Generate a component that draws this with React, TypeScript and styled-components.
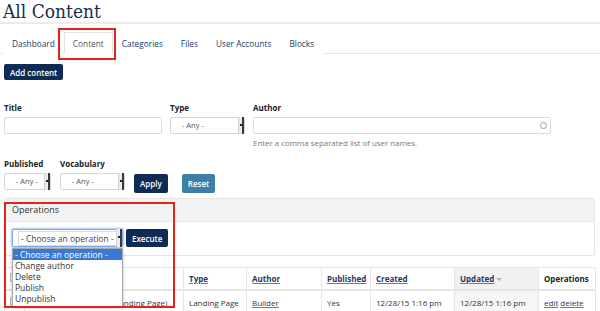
import React from "react";
import styled, { createGlobalStyle } from "styled-components";

const GlobalStyle = createGlobalStyle`
  body {
    margin: 0;
    background: #ffffff;
    font-family: "Open Sans", "Liberation Sans", sans-serif;
    color: #333333;
  }
`;

const Page = styled.div`
  position: relative;
  width: 600px;
  height: 311px;
  overflow: hidden;
  padding: 0 5px 0 4px;
  box-sizing: border-box;
`;

const Heading = styled.h1`
  margin: 0 -5px 0 -4px;
  height: 22px;
  line-height: 22px;
  padding-left: 3px;
  font-family: "DejaVu Serif Condensed", "DejaVu Serif", serif;
  font-weight: normal;
  font-size: 19px;
  color: #1c2c4e;
  border-bottom: 2px solid #ececec;
`;

const TabBar = styled.div`
  display: flex;
  align-items: flex-end;
  height: 21px;
  padding-top: 8px;
  padding-left: 3px;
  margin: 0 -5px 0 -4px;
  border-bottom: 1px solid #e6e6e6;
`;

const Tab = styled.div<{ $active?: boolean }>`
  height: 22px;
  line-height: 21px;
  padding: 0 8px;
  margin-bottom: -1px;
  box-sizing: border-box;
  font-size: 8.3px;
  color: ${(p) => (p.$active ? "#555555" : "#213a66")};
  background: #ffffff;
  border: 1px solid ${(p) => (p.$active ? "#e3e3e3" : "transparent")};
  border-bottom: none;
`;

const Highlight = styled.div<{ $x: number; $y: number; $w: number; $h: number }>`
  position: absolute;
  left: ${(p) => p.$x}px;
  top: ${(p) => p.$y}px;
  width: ${(p) => p.$w}px;
  height: ${(p) => p.$h}px;
  border: 2px solid #e3241b;
  box-sizing: border-box;
  pointer-events: none;
  z-index: 5;
`;

const Button = styled.button<{ $tone?: "navy" | "steel"; $h?: number }>`
  display: block;
  height: ${(p) => p.$h ?? 19}px;
  padding: 0 6px;
  border: none;
  border-radius: 2px;
  background: ${(p) => (p.$tone === "steel" ? "#3d7fa6" : "#0d2b55")};
  color: #ffffff;
  font-family: "Open Sans", "Liberation Sans", sans-serif;
  font-size: 8px;
  font-weight: 600;
  cursor: pointer;
`;

const AddRow = styled.div`
  display: flex;
  margin-top: 10px;
`;

const FilterRow = styled.div<{ $top: number }>`
  display: flex;
  align-items: flex-start;
  gap: 8px;
  margin-top: ${(p) => p.$top}px;
`;

const Field = styled.div<{ $w: number }>`
  display: flex;
  flex-direction: column;
  width: ${(p) => p.$w}px;
`;

const Label = styled.div`
  height: 12px;
  line-height: 12px;
  margin-bottom: 3px;
  font-size: 8px;
  font-weight: 700;
  color: #222222;
`;

const TextInput = styled.div`
  position: relative;
  height: 17px;
  border: 1px solid #dcdcdc;
  border-radius: 2px;
  box-sizing: border-box;
  background: #ffffff;
`;

const Throbber = styled.span`
  position: absolute;
  right: 3px;
  top: 4px;
  width: 5px;
  height: 5px;
  border: 1px solid #9a9a9a;
  border-radius: 50%;
`;

const Help = styled.div`
  margin-top: 3px;
  height: 12px;
  line-height: 12px;
  font-size: 7.9px;
  color: #777777;
`;

const Select = styled.div<{ $focus?: boolean }>`
  position: relative;
  display: flex;
  align-items: center;
  height: ${(p) => (p.$focus ? 18 : 17)}px;
  padding-left: ${(p) => (p.$focus ? 5 : 8)}px;
  border: 1px solid ${(p) => (p.$focus ? "#7fa9df" : "#d6d6d6")};
  box-shadow: ${(p) => (p.$focus ? "0 0 2px 1px #a9c7ef" : "none")};
  border-radius: 2px;
  box-sizing: border-box;
  background: #ffffff;
`;

const SelectText = styled.span<{ $boxed?: boolean }>`
  padding: 0 2px;
  line-height: 13px;
  border: 1px solid ${(p) => (p.$boxed ? "#dcdcdc" : "transparent")};
  font-size: ${(p) => (p.$boxed ? 8.5 : 7.5)}px;
  color: ${(p) => (p.$boxed ? "#444444" : "#555555")};
`;

const Arrow = styled.span`
  position: absolute;
  right: 0;
  top: -1px;
  bottom: -1px;
  width: 3px;
  border-left: 1px solid #cfcfcf;
  border-right: 2px solid #3a3a3a;
  background: #ececec;
  &::after {
    content: "";
    position: absolute;
    left: 1px;
    top: 7px;
    width: 2px;
    height: 2px;
    background: #222222;
  }
`;

const ButtonSlot = styled.div<{ $gap: number }>`
  display: flex;
  padding-top: 16px;
  margin-left: ${(p) => p.$gap}px;
`;

const Panel = styled.div`
  margin-top: 5px;
  border: 1px solid #e6e6e6;
  border-radius: 2px;
`;

const PanelHead = styled.div`
  height: 22px;
  line-height: 22px;
  padding-left: 7px;
  background: #f3f3f3;
  border-bottom: 1px solid #e6e6e6;
  font-size: 9px;
  color: #333333;
`;

const PanelBody = styled.div`
  display: flex;
  gap: 3px;
  padding: 7px 7px 8px 7px;
`;

const OpSelect = styled.div`
  position: relative;
  width: 111px;
`;

const DropList = styled.ul`
  position: absolute;
  left: 0;
  top: 19px;
  width: 111px;
  margin: 0;
  padding: 0 0 2px 0;
  list-style: none;
  background: #ffffff;
  border: 1px solid #a9a9a9;
  box-sizing: border-box;
  box-shadow: 0 1px 3px rgba(0, 0, 0, 0.25);
  z-index: 4;
`;

const DropItem = styled.li<{ $selected?: boolean }>`
  height: 11px;
  line-height: 11px;
  padding-left: 2px;
  font-size: 8.5px;
  background: ${(p) => (p.$selected ? "#3a78d6" : "transparent")};
  color: ${(p) => (p.$selected ? "#ffffff" : "#333333")};
`;

const Table = styled.table`
  margin-top: 11px;
  width: 591px;
  table-layout: fixed;
  border-collapse: collapse;
  font-size: 8px;
`;

const Th = styled.th<{ $sorted?: boolean }>`
  height: 21px;
  padding: 0 5px;
  text-align: left;
  font-weight: 700;
  color: #222222;
  background: ${(p) => (p.$sorted ? "#f1f1f1" : "#ffffff")};
  border: 1px solid #e6e6e6;
  border-bottom-width: 2px;
`;

const Td = styled.td<{ $sorted?: boolean }>`
  height: 22px;
  padding: 0 5px;
  color: #333333;
  white-space: nowrap;
  overflow: hidden;
  background: ${(p) => (p.$sorted ? "#f6f6f6" : "#ffffff")};
  border-left: 1px solid #e6e6e6;
  border-right: 1px solid #e6e6e6;
`;

const Link = styled.a`
  color: #1f3766;
  text-decoration: underline;
  text-decoration-color: #6a7a99;
`;

const SortMark = styled.span`
  display: inline-block;
  margin-left: 2px;
  width: 0;
  height: 0;
  border-left: 3px solid transparent;
  border-right: 3px solid transparent;
  border-top: 3px solid #b5b5b5;
  vertical-align: middle;
`;

const Check = styled.span`
  display: inline-block;
  width: 7px;
  height: 7px;
  border: 1px solid #b8b8b8;
  border-radius: 1px;
  background: #f4f4f4;
`;

const columns = [20, 159, 63, 75, 49, 84, 84, 57];

export default function App() {
  return (
    <Page>
      <GlobalStyle />
      <Heading>All Content</Heading>
      <TabBar>
        <Tab>Dashboard</Tab>
        <Tab $active>Content</Tab>
        <Tab>Categories</Tab>
        <Tab>Files</Tab>
        <Tab>User Accounts</Tab>
        <Tab>Blocks</Tab>
      </TabBar>
      <Highlight $x={58} $y={28} $w={58} $h={32} />

      <AddRow>
        <Button $h={16}>Add content</Button>
      </AddRow>

      <FilterRow $top={22}>
        <Field $w={158}>
          <Label>Title</Label>
          <TextInput />
        </Field>
        <Field $w={75}>
          <Label>Type</Label>
          <Select>
            <SelectText>- Any -</SelectText>
            <Arrow />
          </Select>
        </Field>
        <Field $w={298}>
          <Label>Author</Label>
          <TextInput>
            <Throbber />
          </TextInput>
          <Help>Enter a comma separated list of user names.</Help>
        </Field>
      </FilterRow>

      <FilterRow $top={9}>
        <Field $w={47}>
          <Label>Published</Label>
          <Select>
            <SelectText>- Any -</SelectText>
            <Arrow />
          </Select>
        </Field>
        <Field $w={65} style={{ marginLeft: 1 }}>
          <Label>Vocabulary</Label>
          <Select>
            <SelectText>- Any -</SelectText>
            <Arrow />
          </Select>
        </Field>
        <ButtonSlot $gap={1}>
          <Button>Apply</Button>
        </ButtonSlot>
        <ButtonSlot $gap={6}>
          <Button $tone="steel">Reset</Button>
        </ButtonSlot>
      </FilterRow>

      <Panel>
        <PanelHead>Operations</PanelHead>
        <PanelBody>
          <OpSelect>
            <Select $focus>
              <SelectText $boxed>- Choose an operation -</SelectText>
              <Arrow />
            </Select>
            <DropList>
              <DropItem $selected>- Choose an operation -</DropItem>
              <DropItem>Change author</DropItem>
              <DropItem>Delete</DropItem>
              <DropItem>Publish</DropItem>
              <DropItem>Unpublish</DropItem>
            </DropList>
          </OpSelect>
          <Button $h={18}>Execute</Button>
        </PanelBody>
      </Panel>
      <Highlight $x={4} $y={202} $w={171} $h={106} />

      <Table>
        <colgroup>
          {columns.map((w, i) => (
            <col key={i} style={{ width: w }} />
          ))}
        </colgroup>
        <thead>
          <tr>
            <Th>
              <Check />
            </Th>
            <Th>
              <Link>Title</Link>
            </Th>
            <Th>
              <Link>Type</Link>
            </Th>
            <Th>
              <Link>Author</Link>
            </Th>
            <Th>
              <Link>Published</Link>
            </Th>
            <Th>
              <Link>Created</Link>
            </Th>
            <Th $sorted>
              <Link>Updated</Link>
              <SortMark />
            </Th>
            <Th>Operations</Th>
          </tr>
        </thead>
        <tbody>
          <tr>
            <Td>
              <Check />
            </Td>
            <Td>
              <Link>My Test Landing Page (Landing Page)</Link>
            </Td>
            <Td>Landing Page</Td>
            <Td>
              <Link>Builder</Link>
            </Td>
            <Td>Yes</Td>
            <Td>12/28/15 1:16 pm</Td>
            <Td $sorted>12/28/15 1:16 pm</Td>
            <Td>
              <Link>edit</Link> <Link>delete</Link>
            </Td>
          </tr>
        </tbody>
      </Table>
    </Page>
  );
}
